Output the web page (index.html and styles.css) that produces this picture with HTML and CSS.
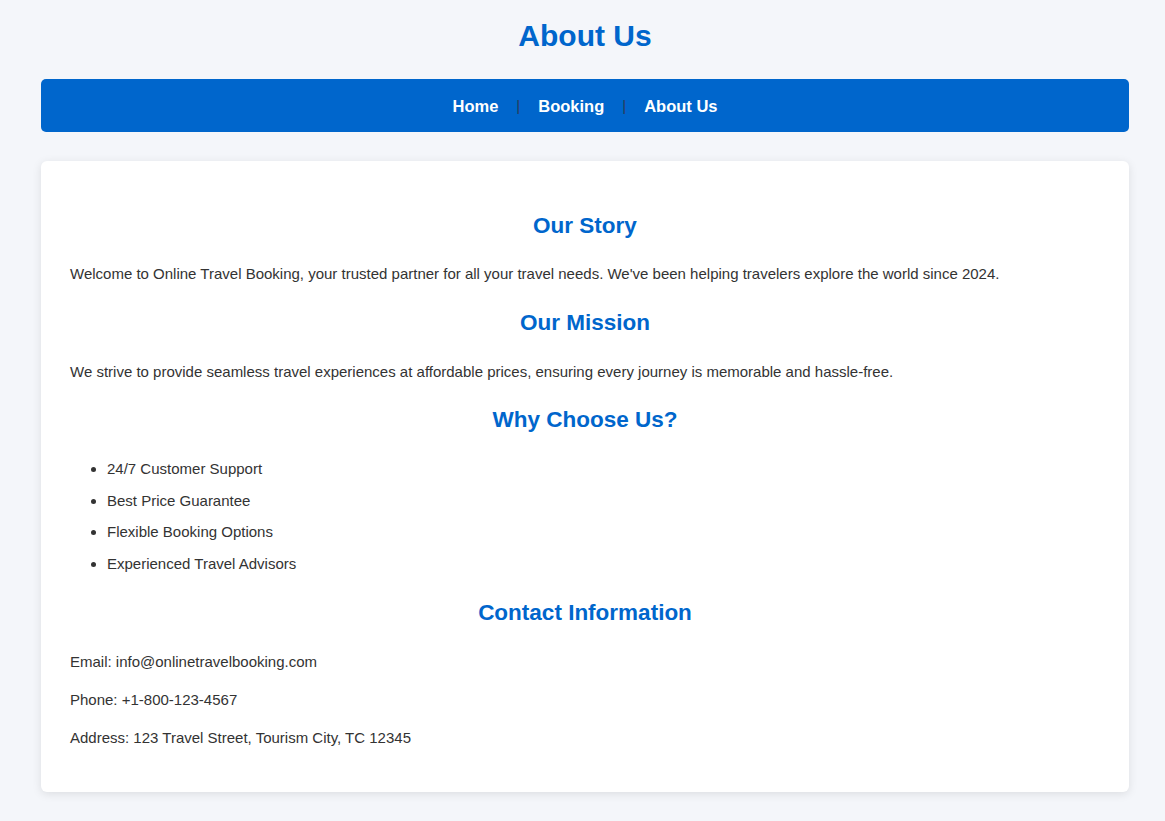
FILE: index.html
```html
<!DOCTYPE html>
<html lang="en">
<head>
<meta charset="utf-8">
<title>About Us</title>
<link rel="stylesheet" href="styles.css">
</head>
<body>
<div class="page">
  <h1 class="title">About Us</h1>
  <nav class="nav">
    <a class="nav-link" href="#">Home</a>
    <span class="nav-sep">|</span>
    <a class="nav-link" href="#">Booking</a>
    <span class="nav-sep">|</span>
    <a class="nav-link" href="#">About Us</a>
  </nav>
  <main class="card">
    <h2 class="section-title">Our Story</h2>
    <p class="text">Welcome to Online Travel Booking, your trusted partner for all your travel needs. We've been helping travelers explore the world since 2024.</p>
    <h2 class="section-title">Our Mission</h2>
    <p class="text">We strive to provide seamless travel experiences at affordable prices, ensuring every journey is memorable and hassle-free.</p>
    <h2 class="section-title">Why Choose Us?</h2>
    <ul class="features">
      <li>24/7 Customer Support</li>
      <li>Best Price Guarantee</li>
      <li>Flexible Booking Options</li>
      <li>Experienced Travel Advisors</li>
    </ul>
    <h2 class="section-title">Contact Information</h2>
    <p class="text">Email: info@onlinetravelbooking.com</p>
    <p class="text">Phone: +1-800-123-4567</p>
    <p class="text">Address: 123 Travel Street, Tourism City, TC 12345</p>
  </main>
</div>
</body>
</html>
```

FILE: styles.css
```css
* { box-sizing: border-box; }
html, body {
  margin: 0;
  padding: 0;
}
body {
  background: #f4f6fa;
  color: #333;
  font-family: "Liberation Sans", Arial, sans-serif;
  font-size: 15px;
  line-height: 1.6;
}
.page {
  width: 1088px;
  margin: 0 0 0 41px;
  padding: 12px 0 29px;
}
.title {
  margin: 0 0 19px;
  font-size: 30px;
  line-height: 48px;
  text-align: center;
  color: #0066cc;
  font-weight: bold;
}
.nav {
  background: #0066cc;
  border-radius: 5px;
  display: flex;
  justify-content: center;
  align-items: center;
  gap: 18px;
  padding: 13.5px 0;
}
.nav-link {
  color: #fff;
  text-decoration: none;
  font-weight: bold;
  font-size: 16.5px;
  line-height: 26px;
}
.nav-sep {
  color: #2b3a55;
  font-size: 15px;
  line-height: 26px;
}
.card {
  display: block;
  margin-top: 29px;
  background: #fff;
  border-radius: 6px;
  box-shadow: 0 2px 10px rgba(0, 0, 0, 0.1);
  padding: 28px 29px;
}
.section-title {
  color: #0066cc;
  text-align: center;
  font-size: 22.5px;
  line-height: 36px;
  margin: 18.7px 0;
  font-weight: bold;
}
.text {
  margin: 14px 0;
}
.features {
  margin: 19px 0;
  padding-left: 37px;
}
.features li {
  margin-bottom: 7.5px;
}
.features li:last-child {
  margin-bottom: 0;
}
```
